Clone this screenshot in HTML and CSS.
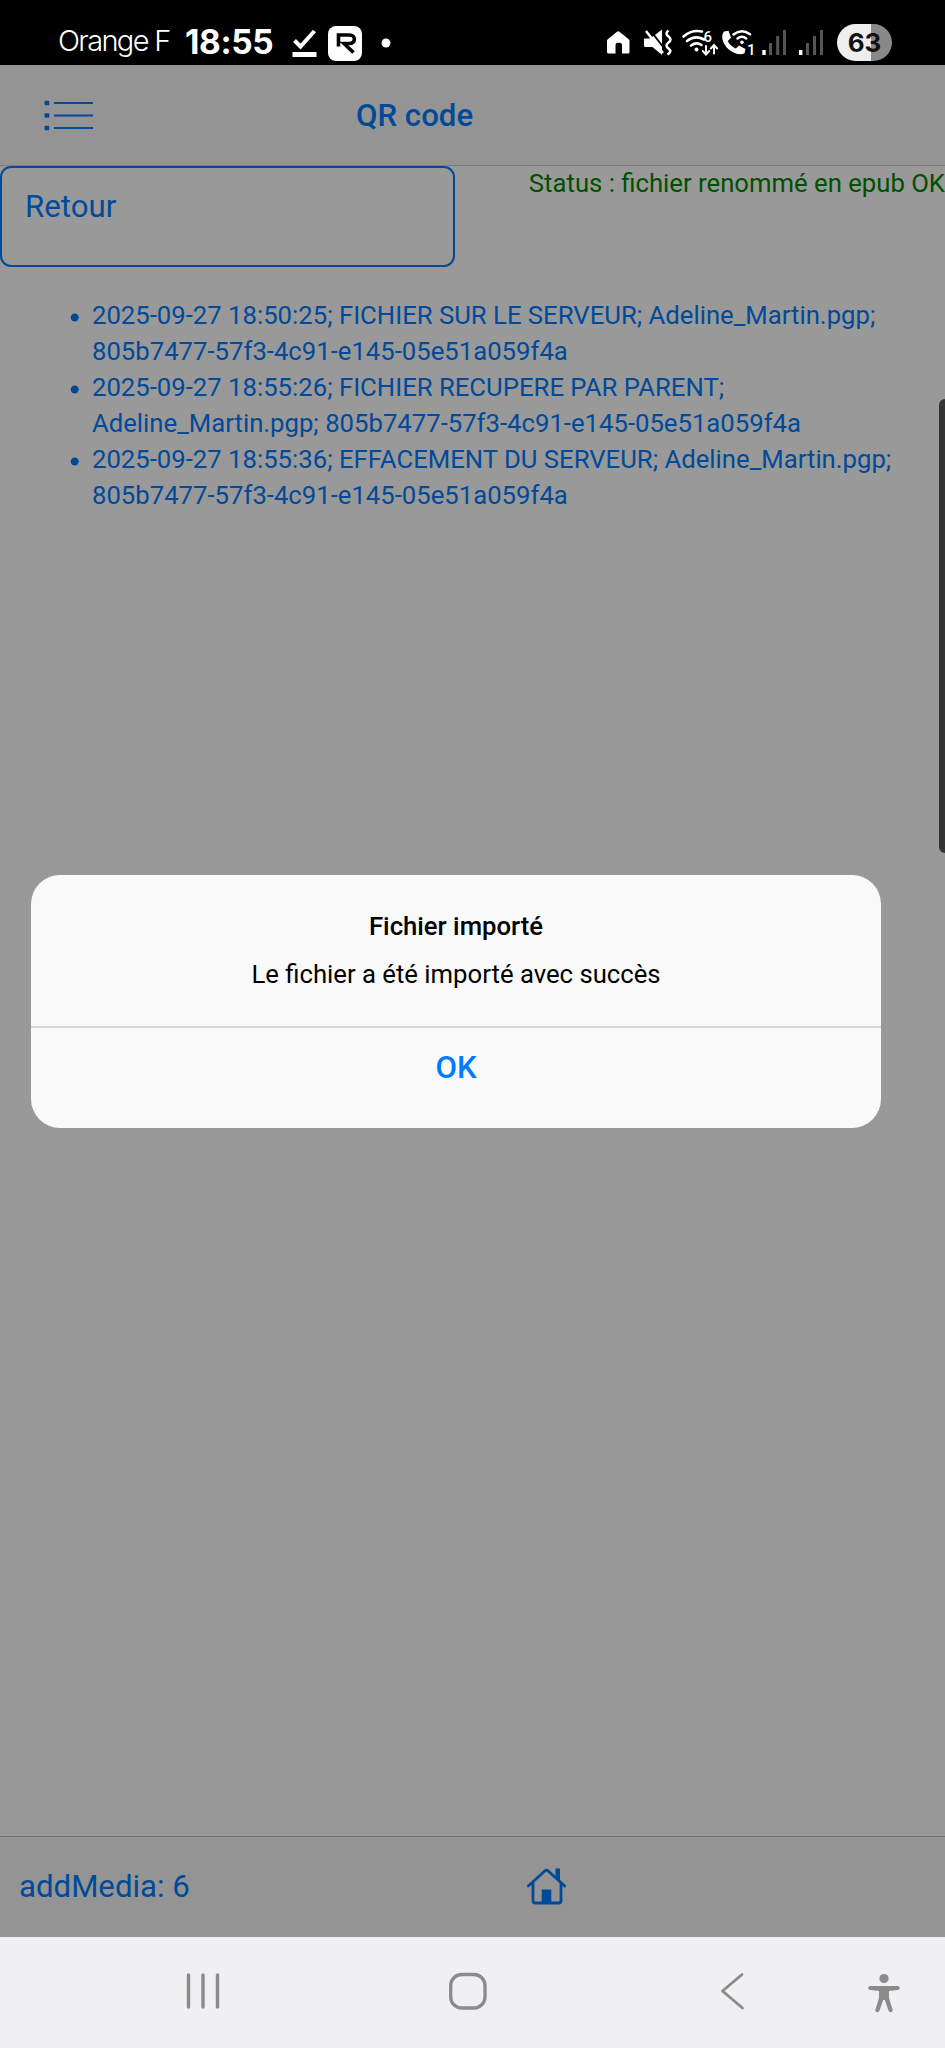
FILE: index.html
```html
<!DOCTYPE html>
<html lang="fr">
<head>
<meta charset="utf-8">
<title>QR code</title>
<link rel="stylesheet" href="styles.css">
</head>
<body>
<div class="screen">
  <header class="status-bar">
    <span class="carrier">Orange F</span>
    <span class="clock">18:55</span>
    <svg class="status-left" width="116" height="65" viewBox="284 0 116 65">
      <path d="M294.500 40.500l6 6L314.500 31" fill="none" stroke="#fff" stroke-width="4"/>
      <rect x="292.500" y="52" width="24" height="5" fill="#fff"/>
      <rect x="328" y="26" width="34" height="35" rx="8" fill="#fff"/>
      <path d="M338.500 46.500V35H349.500c6.500 0 6.500 8.500 0 8.500H344L353.500 52.500" fill="none" stroke="#000" stroke-width="3.600"/>
      <circle cx="386" cy="43" r="4.500" fill="#fff"/>
    </svg>
    <svg class="status-right" width="237" height="65" viewBox="600 0 237 65">
      <path d="M607 52V41q0-1 1-2l9-7.300q1.200-.9 2.400 0L628.500 39q1 1 1 2v11q0 1.500-1.500 1.500h-6V45q0-2.300-2.300-2.300h-1.900q-2.300 0-2.300 2.300v8.500H608.500q-1.500 0-1.500-1.500z" fill="#fff"/>
      <path d="M644 38.500h5.500l4-2.500 8.500 11v8l-9.500-8h-7q-1.500 0-1.500-1.500zM655 35l7-5.500V44z" fill="#fff"/>
      <path d="M646 31l17 22" stroke="#fff" stroke-width="2.400"/>
      <path d="M668.500 30.500q-4 3 0 6t0 6t0 6t-1 6" fill="none" stroke="#fff" stroke-width="2.500"/>
      <g fill="none" stroke="#fff" stroke-width="2.600" stroke-linecap="round">
        <path d="M683.500 36.500q8-7 18.500-5M687 41q8-6.500 17-1.500M691 45.500q5.500-4 10.500-.5"/>
        <path d="M706 46v8M702.800 51l3.200 3.500 3.200-3.500M714 53.500v-8.500M710.800 48.500l3.200-3.500 3.200 3.500" stroke-width="2"/>
      </g>
      <circle cx="696.500" cy="49.500" r="2" fill="#fff"/>
      <text class="badge-digit" x="703.500" y="41.500" font-size="15">6</text>
      <path d="M724 31.500l4.500-.8 2.500 7-3.200 3.200q2 5 8 7.500l3.200-3 6.500 3.600-1 4.200q-5 2.500-12-1.200q-8-4.500-10-12.500q-1-5 1.500-8z" fill="#fff"/>
      <g fill="none" stroke="#fff" stroke-width="2.500" stroke-linecap="round"><path d="M733.500 34.500q8-6.500 16.500-.3M737.500 38.500q4.500-3.500 8.700 0"/></g>
      <circle cx="742" cy="42.300" r="1.800" fill="#fff"/>
      <text class="badge-digit" x="747" y="55" font-size="15">1</text>
      <g fill="#fff"><rect x="762.300" y="50" width="3.400" height="5"/><rect x="799" y="50" width="3.400" height="5"/></g>
      <g fill="#555"><rect x="769" y="43" width="3" height="12"/><rect x="776.200" y="36" width="3" height="19"/><rect x="783" y="30" width="3" height="25"/><rect x="806" y="43" width="3" height="12"/><rect x="813" y="36" width="3" height="19"/><rect x="820" y="30" width="3" height="25"/></g>
    </svg>
    <span class="battery">63</span>
  </header>

  <nav class="navbar">
    <svg class="menu-icon" width="50" height="32" viewBox="44 100 50 32">
      <g fill="#004a97"><rect x="44.500" y="100.700" width="4.800" height="4.600" rx="1"/><rect x="44.500" y="113.200" width="4.800" height="4.600" rx="1"/><rect x="44.500" y="125.700" width="4.800" height="4.600" rx="1"/><rect x="54" y="102" width="39" height="2"/><rect x="54" y="114.500" width="39" height="2"/><rect x="54" y="127" width="39" height="2"/></g>
    </svg>
    <h1 class="navbar-title">QR code</h1>
  </nav>

  <main class="content">
    <div class="top-row">
      <a class="back-button">Retour</a>
      <span class="status-text">Status : fichier renommé en epub OK</span>
    </div>
    <ul class="log">
      <li>2025-09-27 18:50:25; FICHIER SUR LE SERVEUR; Adeline_Martin.pgp; 805b7477-57f3-4c91-e145-05e51a059f4a</li>
      <li>2025-09-27 18:55:26; FICHIER RECUPERE PAR PARENT; Adeline_Martin.pgp; 805b7477-57f3-4c91-e145-05e51a059f4a</li>
      <li>2025-09-27 18:55:36; EFFACEMENT DU SERVEUR; Adeline_Martin.pgp; 805b7477-57f3-4c91-e145-05e51a059f4a</li>
    </ul>
  </main>

  <footer class="toolbar">
    <span class="media-count">addMedia: 6</span>
    <svg class="home-icon" width="42" height="42" viewBox="526 1865 42 42">
      <path d="M528.300 1885l16.500-15q1.700-1.500 3.400 0l16.500 15M533 1882v17.500q0 2.500 2.500 2.500h23q2.500 0 2.500-2.500V1882" fill="none" stroke="#004a99" stroke-width="2.800" stroke-linecap="round"/>
      <path d="M555.500 1867.500h4.500v12l-4.500-4zM541.700 1888.500h9.600v13.500h-9.600z" fill="#004a99"/>
    </svg>
  </footer>

  <div class="system-nav">
    <svg width="36" height="40" viewBox="185 1971 36 40"><path d="M188.500 1975v32M203 1975v32M217.500 1975v32" stroke="#8b8b8b" stroke-width="3.400" stroke-linecap="round"/></svg>
    <svg class="nav-home" width="40" height="40" viewBox="447.500 1971 40 40"><rect x="450.200" y="1974.500" width="34.300" height="33.500" rx="11" fill="none" stroke="#8b8b8b" stroke-width="3.300"/></svg>
    <svg class="nav-back" width="26" height="40" viewBox="720 1971 26 40"><path d="M742 1974.500L722.500 1991l20 17" fill="none" stroke="#8b8b8b" stroke-width="2.800" stroke-linecap="round" stroke-linejoin="round"/></svg>
    <svg class="nav-access" width="34" height="42" viewBox="866.500 1972 34 42"><circle cx="883.500" cy="1978.500" r="4.600" fill="#8b8b8b"/><path d="M870 1986h27q2.300 0 2.300 2t-2.300 2l-8.500 1v7l3.700 12q.3 2-1.700 2.200t-2.500-1.700L884.300 2000h-1.600l-3.700 10.500q-.5 1.900-2.500 1.700t-1.700-2.200l3.700-12v-7l-8.500-1q-2.300 0-2.300-2t2.300-2z" fill="#8b8b8b"/></svg>
  </div>

  <div class="edge-handle"></div>

  <div class="dialog" role="dialog">
    <div class="dialog-inner">
      <div class="dialog-title">Fichier importé</div>
      <div class="dialog-text">Le fichier a été importé avec succès</div>
    </div>
    <a class="dialog-button">OK</a>
  </div>
</div>
</body>
</html>
```

FILE: styles.css
```css
* { box-sizing: border-box; }
body {
  margin: 0;
  font-family: Roboto, sans-serif;
  font-size: 25.7px;
  line-height: 36px;
  background: #999;
  color: #004a99;
}
svg { display: block; flex: none; }
.screen {
  position: relative;
  width: 945px;
  height: 2048px;
  display: flex;
  flex-direction: column;
  overflow: hidden;
}
.status-bar {
  flex: none;
  height: 65px;
  padding-left: 58px;
  display: flex;
  background: #000;
  color: #fff;
  font-family: Inter, sans-serif;
  white-space: nowrap;
}
.carrier {
  width: 127px;
  padding-top: 23px;
  font-size: 29px;
  font-weight: 300;
  letter-spacing: -1.65px;
}
.clock {
  width: 99px;
  padding-top: 24px;
  font-size: 33.5px;
  font-weight: 700;
  letter-spacing: -0.4px;
}
.status-right { margin-left: 200px; }
.badge-digit { fill: #fff; font-family: Roboto, sans-serif; font-weight: 500; }
.battery {
  width: 55px;
  height: 37px;
  margin-top: 24px;
  border-radius: 19px;
  background: linear-gradient(90deg, #eee 34px, #888 34px);
  color: #111;
  font-size: 26px;
  font-weight: 700;
  line-height: 37px;
  text-align: center;
}
.navbar {
  flex: none;
  height: 101px;
  padding: 2px 0 0 44px;
  display: flex;
  align-items: center;
  background: #949494;
  border-bottom: 1px solid #7c7c7c;
}
.navbar-title {
  margin: 0 0 0 262px;
  font-size: 31.2px;
  font-weight: 500;
}
.content { flex: 1; }
.top-row {
  display: flex;
  justify-content: space-between;
  align-items: flex-start;
}
.back-button {
  width: 455px;
  height: 101px;
  padding: 19px 23px;
  border: 2px solid #004a99;
  border-radius: 11px;
  font-size: 31.2px;
  line-height: 40px;
}
.status-text {
  color: #005000;
  line-height: 34px;
  white-space: nowrap;
}
.log {
  margin: 30px 0 0;
  padding: 0 40px 0 70px;
  list-style: none;
}
.log li {
  padding-left: 22px;
  background: radial-gradient(circle at 4.7px 20.5px, #004a99 3.6px, transparent 4.4px);
}
.toolbar {
  flex: none;
  height: 101px;
  padding-left: 19px;
  display: flex;
  align-items: center;
  background: #949494;
  border-top: 1px solid #737373;
  font-size: 31.2px;
}
.media-count { width: 507px; }
.system-nav {
  flex: none;
  height: 111px;
  padding: 0 0 4px 185px;
  display: flex;
  align-items: center;
  background: #f0f0f2;
}
.nav-home { margin-left: 226.5px; }
.nav-back { margin-left: 232.5px; }
.nav-access { margin: 5px 0 0 120.5px; }
.edge-handle {
  position: absolute;
  top: 399px;
  right: 0;
  width: 6px;
  height: 454px;
  border-radius: 6px 0 0 6px;
  background: #333;
}
.dialog {
  position: absolute;
  top: 875px;
  left: 31px;
  width: 850px;
  height: 253px;
  border-radius: 29px;
  background: #fafafa;
  color: #000;
  text-align: center;
}
.dialog-inner {
  height: 153px;
  padding-top: 33px;
  border-bottom: 2px solid #d8d8d8;
}
.dialog-title { font-weight: 500; }
.dialog-text { margin-top: 12px; }
.dialog-button {
  display: block;
  padding-top: 19px;
  font-size: 31.2px;
  line-height: 42px;
  font-weight: 500;
  color: #007aff;
}
```
